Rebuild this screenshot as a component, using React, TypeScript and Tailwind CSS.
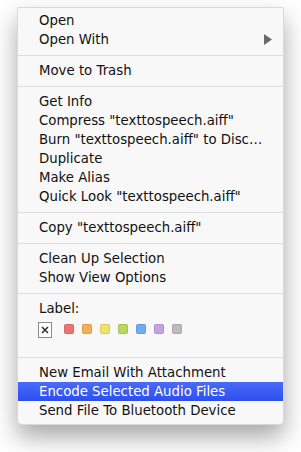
import React from "react";

const font = { fontFamily: '"DejaVu Sans", sans-serif' };

function Item({ label, highlight, arrow }: { label: string; highlight?: boolean; arrow?: boolean }) {
  return (
    <div
      className={
        "h-[19px] flex items-center pl-[21px] pr-[11px] text-[13.3px] leading-none " +
        (highlight ? "bg-gradient-to-b from-[#4a6af8] to-[#2d4ef0] text-white" : "text-[#111]")
      }
    >
      <span className="flex-1 whitespace-nowrap">{label}</span>
      {arrow && (
        <svg width="8" height="11" viewBox="0 0 8 11">
          <polygon points="0,0 8,5.5 0,11" fill="#6a6a6a" />
        </svg>
      )}
    </div>
  );
}

function Sep() {
  return (
    <div className="h-[12px] flex items-center">
      <div className="h-px w-full bg-[#dedede]" />
    </div>
  );
}

const swatches = ["#ee7474", "#f4ae55", "#f1e26a", "#b8d860", "#6eaef0", "#c7a2e2", "#bcbcbc"];

export default function App() {
  return (
    <div className="w-[301px] h-[452px] bg-white pt-[7px] pl-[17px]" style={font}>
      <div className="w-[267px] bg-[#f8f8f8] border border-[rgba(0,0,0,0.12)] rounded-b-[5px] rounded-t-[2px] pt-[3px] pb-[4px] shadow-[0_12px_24px_rgba(0,0,0,0.35)] overflow-hidden">
        <Item label="Open" />
        <Item label="Open With" arrow />
        <Sep />
        <Item label="Move to Trash" />
        <Sep />
        <Item label="Get Info" />
        <Item label={'Compress "texttospeech.aiff"'} />
        <Item label={'Burn "texttospeech.aiff" to Disc\u2026'} />
        <Item label="Duplicate" />
        <Item label="Make Alias" />
        <Item label={'Quick Look "texttospeech.aiff"'} />
        <Sep />
        <Item label={'Copy "texttospeech.aiff"'} />
        <Sep />
        <Item label="Clean Up Selection" />
        <Item label="Show View Options" />
        <Sep />
        <Item label="Label:" />
        <div className="h-[33px] flex items-start pt-[4px] pl-[20px] gap-[8px]">
          <div className="w-[14px] h-[16px] border border-[#8a8a8a] bg-white flex items-center justify-center mr-[4px]">
            <svg width="8" height="8" viewBox="0 0 8 8">
              <path d="M1 1 L7 7 M7 1 L1 7" stroke="#333" strokeWidth="1.6" />
            </svg>
          </div>
          {swatches.map((c) => (
            <div
              key={c}
              className="w-[10px] h-[10px] rounded-[2px] mt-[2px] border border-[rgba(0,0,0,0.1)]"
              style={{ backgroundColor: c }}
            />
          ))}
        </div>
        <Sep />
        <Item label="New Email With Attachment" />
        <Item label="Encode Selected Audio Files" highlight />
        <Item label="Send File To Bluetooth Device" />
      </div>
    </div>
  );
}
